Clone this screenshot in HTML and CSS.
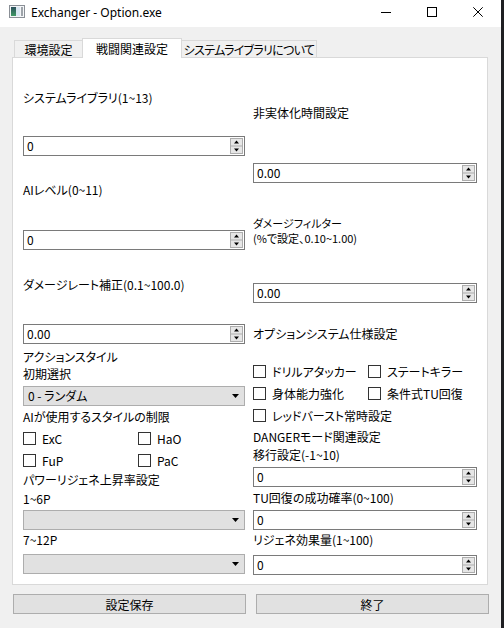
FILE: index.html
```html
<!DOCTYPE html>
<html lang="ja">
<head>
<meta charset="utf-8">
<title>Exchanger - Option.exe</title>
<link rel="stylesheet" href="styles.css">
</head>
<body>
<div class="window">
  <header class="titlebar">
    <svg class="app-icon" width="16" height="13" viewBox="0 0 16 13">
      <defs>
        <linearGradient id="g1" x1="0" y1="0" x2="0" y2="1">
          <stop offset="0" stop-color="#2b4f5c"/>
          <stop offset="1" stop-color="#3f9a64"/>
        </linearGradient>
      </defs>
      <rect x="0.5" y="0.5" width="15" height="12" fill="#f4f6f8" stroke="#8a8f96"/>
      <rect x="2" y="2" width="5" height="9" fill="url(#g1)"/>
      <rect x="7" y="2" width="4" height="9" fill="#d9e7f2"/>
      <rect x="12" y="2" width="2" height="9" fill="#9ea4aa"/>
    </svg>
    <span class="title">Exchanger - Option.exe</span>
    <div class="caption">
      <div class="cbtn"><svg width="10" height="10" viewBox="0 0 10 10"><line x1="0" y1="5.5" x2="10" y2="5.5" stroke="#000" stroke-width="1"/></svg></div>
      <div class="cbtn"><svg width="10" height="10" viewBox="0 0 10 10"><rect x="0.5" y="0.5" width="9" height="9" fill="none" stroke="#000" stroke-width="1"/></svg></div>
      <div class="cbtn"><svg width="10" height="10" viewBox="0 0 10 10"><path d="M0.3 0.3 L9.7 9.7 M9.7 0.3 L0.3 9.7" stroke="#000" stroke-width="1"/></svg></div>
    </div>
  </header>

  <div class="tabs">
    <div class="tab t1">環境設定</div>
    <div class="tab t2 active">戦闘関連設定</div>
    <div class="tab t3">システムライブラリについて</div>
  </div>

  <div class="pane">
    <div class="col col-left">
      <div class="label mt31">システムライブラリ(1~13)</div>
      <div class="spin mt29"><span class="val">0</span><svg class="spinbtn" width="13" height="16" viewBox="0 0 13 16"><rect x="0.5" y="0.5" width="12" height="15" fill="#e6e6e6" stroke="#adadad"/><line x1="0.5" y1="8" x2="12.5" y2="8" stroke="#adadad"/><polygon points="4,5.5 9,5.5 6.5,2.5" fill="#000"/><polygon points="4,10.5 9,10.5 6.5,13.5" fill="#000"/></svg></div>
      <div class="label mt25">AIレベル(0~11)</div>
      <div class="spin mt31"><span class="val">0</span><svg class="spinbtn" width="13" height="16" viewBox="0 0 13 16"><rect x="0.5" y="0.5" width="12" height="15" fill="#e6e6e6" stroke="#adadad"/><line x1="0.5" y1="8" x2="12.5" y2="8" stroke="#adadad"/><polygon points="4,5.5 9,5.5 6.5,2.5" fill="#000"/><polygon points="4,10.5 9,10.5 6.5,13.5" fill="#000"/></svg></div>
      <div class="label mt26">ダメージレート補正(0.1~100.0)</div>
      <div class="spin mt30"><span class="val">0.00</span><svg class="spinbtn" width="13" height="16" viewBox="0 0 13 16"><rect x="0.5" y="0.5" width="12" height="15" fill="#e6e6e6" stroke="#adadad"/><line x1="0.5" y1="8" x2="12.5" y2="8" stroke="#adadad"/><polygon points="4,5.5 9,5.5 6.5,2.5" fill="#000"/><polygon points="4,10.5 9,10.5 6.5,13.5" fill="#000"/></svg></div>
      <div class="label tight mt4">アクションスタイル</div>
      <div class="label tight">初期選択</div>
      <div class="combo mt4"><span class="val">0 - ランダム</span><svg width="7" height="4" viewBox="0 0 7 4"><polygon points="0,0 7,0 3.5,4" fill="#000"/></svg></div>
      <div class="label mt2">AIが使用するスタイルの制限</div>
      <div class="checks mt3">
        <div class="check"><span class="box"></span><span>ExC</span></div>
        <div class="check"><span class="box"></span><span>HaO</span></div>
        <div class="check"><span class="box"></span><span>FuP</span></div>
        <div class="check"><span class="box"></span><span>PaC</span></div>
      </div>
      <div class="label mt2">パワーリジェネ上昇率設定</div>
      <div class="label mt1">1~6P</div>
      <div class="combo mt2"><span class="val"></span><svg width="7" height="4" viewBox="0 0 7 4"><polygon points="0,0 7,0 3.5,4" fill="#000"/></svg></div>
      <div class="label mt1">7~12P</div>
      <div class="combo mt5"><span class="val"></span><svg width="7" height="4" viewBox="0 0 7 4"><polygon points="0,0 7,0 3.5,4" fill="#000"/></svg></div>
    </div>

    <div class="col col-right">
      <div class="label mt46">非実体化時間設定</div>
      <div class="spin mt41"><span class="val">0.00</span><svg class="spinbtn" width="13" height="16" viewBox="0 0 13 16"><rect x="0.5" y="0.5" width="12" height="15" fill="#e6e6e6" stroke="#adadad"/><line x1="0.5" y1="8" x2="12.5" y2="8" stroke="#adadad"/><polygon points="4,5.5 9,5.5 6.5,2.5" fill="#000"/><polygon points="4,10.5 9,10.5 6.5,13.5" fill="#000"/></svg></div>
      <div class="label two mt33">ダメージフィルター<br>(%で設定、0.10~1.00)</div>
      <div class="spin mt37"><span class="val">0.00</span><svg class="spinbtn" width="13" height="16" viewBox="0 0 13 16"><rect x="0.5" y="0.5" width="12" height="15" fill="#e6e6e6" stroke="#adadad"/><line x1="0.5" y1="8" x2="12.5" y2="8" stroke="#adadad"/><polygon points="4,5.5 9,5.5 6.5,2.5" fill="#000"/><polygon points="4,10.5 9,10.5 6.5,13.5" fill="#000"/></svg></div>
      <div class="label mt22">オプションシステム仕様設定</div>
      <div class="checks mt19">
        <div class="check"><span class="box"></span><span>ドリルアタッカー</span></div>
        <div class="check"><span class="box"></span><span>ステートキラー</span></div>
        <div class="check"><span class="box"></span><span>身体能力強化</span></div>
        <div class="check"><span class="box"></span><span>条件式TU回復</span></div>
        <div class="check"><span class="box"></span><span>レッドバースト常時設定</span></div>
      </div>
      <div class="label mt4">DANGERモード関連設定</div>
      <div class="label">移行設定(-1~10)</div>
      <div class="spin mt3"><span class="val">0</span><svg class="spinbtn" width="13" height="16" viewBox="0 0 13 16"><rect x="0.5" y="0.5" width="12" height="15" fill="#e6e6e6" stroke="#adadad"/><line x1="0.5" y1="8" x2="12.5" y2="8" stroke="#adadad"/><polygon points="4,5.5 9,5.5 6.5,2.5" fill="#000"/><polygon points="4,10.5 9,10.5 6.5,13.5" fill="#000"/></svg></div>
      <div class="label mt2">TU回復の成功確率(0~100)</div>
      <div class="spin mt3"><span class="val">0</span><svg class="spinbtn" width="13" height="16" viewBox="0 0 13 16"><rect x="0.5" y="0.5" width="12" height="15" fill="#e6e6e6" stroke="#adadad"/><line x1="0.5" y1="8" x2="12.5" y2="8" stroke="#adadad"/><polygon points="4,5.5 9,5.5 6.5,2.5" fill="#000"/><polygon points="4,10.5 9,10.5 6.5,13.5" fill="#000"/></svg></div>
      <div class="label mt1">リジェネ効果量(1~100)</div>
      <div class="spin mt6"><span class="val">0</span><svg class="spinbtn" width="13" height="16" viewBox="0 0 13 16"><rect x="0.5" y="0.5" width="12" height="15" fill="#e6e6e6" stroke="#adadad"/><line x1="0.5" y1="8" x2="12.5" y2="8" stroke="#adadad"/><polygon points="4,5.5 9,5.5 6.5,2.5" fill="#000"/><polygon points="4,10.5 9,10.5 6.5,13.5" fill="#000"/></svg></div>
    </div>
  </div>

  <div class="buttons">
    <button class="btn">設定保存</button>
    <button class="btn">終了</button>
  </div>
</div>
</body>
</html>
```

FILE: styles.css
```css
* { box-sizing: border-box; }

html, body {
  margin: 0;
  padding: 0;
}

body {
  width: 504px;
  height: 628px;
  overflow: hidden;
  background: #1e1f22;
  font-family: "Noto Sans CJK JP", "Noto Sans", sans-serif;
  font-size: 12px;
  color: #000;
  font-feature-settings: "palt";
}

.window {
  width: 501px;
  height: 628px;
  background: #f0f0f0;
  display: flex;
  flex-direction: column;
}

/* title bar */
.titlebar {
  height: 27px;
  flex: none;
  background: #fff;
  display: flex;
  align-items: flex-start;
}

.app-icon {
  margin: 5px 0 0 9px;
  flex: none;
}

.title {
  flex: 1;
  margin: 4px 0 0 6px;
  line-height: 17px;
  font-family: "Noto Sans", "Open Sans", sans-serif;
  font-size: 12px;
  font-feature-settings: normal;
}

.caption {
  display: flex;
}

.cbtn {
  width: 46px;
  height: 23px;
  display: flex;
  align-items: center;
  justify-content: center;
}

/* tabs */
.tabs {
  display: flex;
  align-items: flex-end;
  height: 19px;
  margin: 11px 0 0 14px;
  position: relative;
  z-index: 1;
}

.tab {
  height: 17px;
  border: 1px solid #d9d9d9;
  border-bottom: none;
  background: #f0f0f0;
  display: flex;
  align-items: center;
  justify-content: center;
  line-height: 15px;
  white-space: nowrap;
  overflow: hidden;
}

.tab + .tab { margin-left: -1px; }

.tab.active {
  height: 20px;
  background: #fff;
  margin-bottom: -1px;
}

.t1 { width: 69px; }
.t2 { width: 100px; }
.t3 { width: 136px; letter-spacing: -0.7px; }

/* pane */
.pane {
  margin-left: 12px;
  width: 476px;
  height: 528px;
  flex: none;
  border: 1px solid #d9d9d9;
  background: #fff;
  display: flex;
  gap: 8px;
  padding-left: 10px;
}

.col {
  display: flex;
  flex-direction: column;
}

.col-left { width: 222px; }
.col-right { width: 224px; }

.label {
  height: 18px;
  line-height: 18px;
  white-space: nowrap;
  flex: none;
}

.label.tight {
  height: 17px;
  line-height: 17px;
}

.label.two {
  height: 30px;
  line-height: 15px;
  font-size: 11px;
}

.spin {
  height: 20px;
  flex: none;
  border: 1px solid #7a7a7a;
  background: #fff;
  display: flex;
  align-items: center;
  padding-left: 3px;
  padding-right: 1px;
}

.val {
  flex: 1;
  line-height: 16px;
}

.combo {
  height: 20px;
  flex: none;
  border: 1px solid #adadad;
  background: #e1e1e1;
  display: flex;
  align-items: center;
  padding: 0 5px 0 4px;
}

.checks {
  display: grid;
  grid-template-columns: 115px auto;
  row-gap: 4px;
  flex: none;
}

.check {
  height: 18px;
  display: flex;
  align-items: center;
  gap: 6px;
  white-space: nowrap;
}

.box {
  width: 13px;
  height: 13px;
  flex: none;
  border: 1px solid #333;
  background: #fff;
}

/* bottom buttons */
.buttons {
  display: flex;
  gap: 10px;
  margin: 9px 0 0 13px;
}

.btn {
  width: 233px;
  height: 20px;
  padding: 0;
  border: 1px solid #adadad;
  background: #e1e1e1;
  font: inherit;
  color: #000;
  display: flex;
  align-items: center;
  justify-content: center;
}

/* vertical spacing */
.mt1 { margin-top: 1px; }
.mt2 { margin-top: 2px; }
.mt3 { margin-top: 3px; }
.mt4 { margin-top: 4px; }
.mt5 { margin-top: 5px; }
.mt6 { margin-top: 6px; }
.mt19 { margin-top: 19px; }
.mt22 { margin-top: 22px; }
.mt25 { margin-top: 25px; }
.mt26 { margin-top: 26px; }
.mt29 { margin-top: 29px; }
.mt30 { margin-top: 30px; }
.mt31 { margin-top: 31px; }
.mt33 { margin-top: 33px; }
.mt37 { margin-top: 37px; }
.mt41 { margin-top: 41px; }
.mt46 { margin-top: 46px; }
```
